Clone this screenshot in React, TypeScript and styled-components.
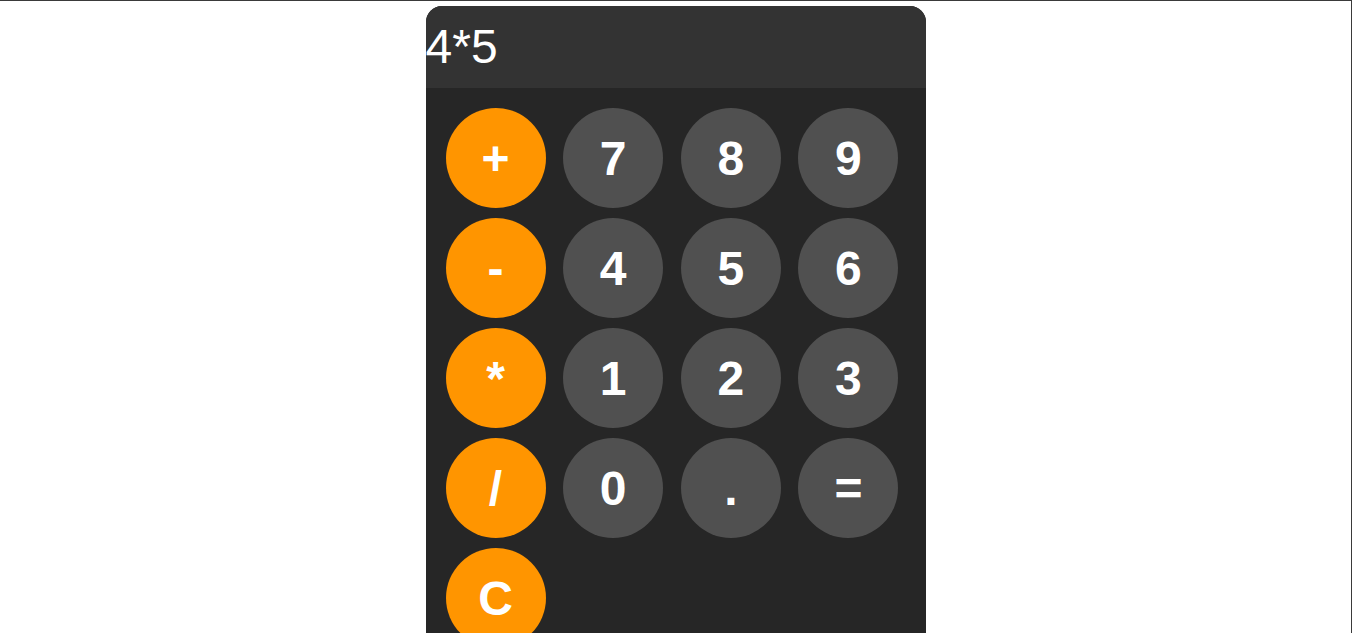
import styled, { createGlobalStyle } from "styled-components";

const GlobalStyle = createGlobalStyle`
  html {
    border-top: 1px solid #3a3a3a;
    border-right: 1px solid #3a3a3a;
    height: 100%;
    overflow: hidden;
    box-sizing: border-box;
  }
  body {
    margin: 0;
    background: #ffffff;
    font-family: "Liberation Sans", Arial, sans-serif;
  }
`;

const Calculator = styled.div`
  width: 500px;
  margin: 5px auto 0;
  border-radius: 16px 16px 0 0;
  overflow: hidden;
  background-color: #262626;
`;

const Display = styled.div`
  height: 82px;
  box-sizing: border-box;
  padding: 13px 0 0 0;
  background-color: #333333;
  color: #ffffff;
  font-size: 48px;
  line-height: normal;
`;

const Keypad = styled.div`
  display: grid;
  grid-template-columns: repeat(4, 100px);
  justify-content: space-between;
  row-gap: 10px;
  padding: 20px 27px 20px 20px;
`;

const Key = styled.button<{ $operator?: boolean }>`
  width: 100px;
  height: 100px;
  border: none;
  border-radius: 50%;
  padding: 0;
  background-color: ${({ $operator }) => ($operator ? "#ff9500" : "#505050")};
  color: #ffffff;
  font-family: "Liberation Sans", Arial, sans-serif;
  font-size: 48px;
  font-weight: 700;
  cursor: pointer;
  display: flex;
  align-items: center;
  justify-content: center;
`;

const rows = [
  ["+", "7", "8", "9"],
  ["-", "4", "5", "6"],
  ["*", "1", "2", "3"],
  ["/", "0", ".", "="],
  ["C"],
];

const App = () => {
  return (
    <>
      <GlobalStyle />
      <Calculator>
        <Display>4*5</Display>
        <Keypad>
          {rows.map((row) =>
            row.map((key, i) => (
              <Key key={key} $operator={i === 0}>
                {key}
              </Key>
            ))
          )}
        </Keypad>
      </Calculator>
    </>
  );
};

export default App;
